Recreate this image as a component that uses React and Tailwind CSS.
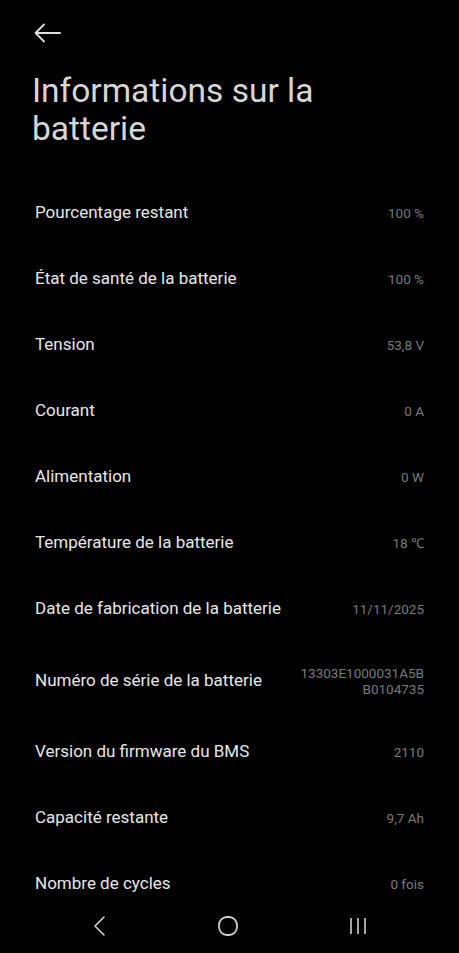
const rows = [
  ["Pourcentage restant", "100 %"],
  ["État de santé de la batterie", "100 %"],
  ["Tension", "53,8 V"],
  ["Courant", "0 A"],
  ["Alimentation", "0 W"],
  ["Température de la batterie", "18 ℃"],
  ["Date de fabrication de la batterie", "11/11/2025"],
  ["Numéro de série de la batterie", "13303E1000031A5B\nB0104735"],
  ["Version du firmware du BMS", "2110"],
  ["Capacité restante", "9,7 Ah"],
  ["Nombre de cycles", "0 fois"],
];

export default function App() {
  return (
    <div className="relative h-[953px] w-[459px] overflow-hidden bg-black font-['Roboto',sans-serif]">
      <div className="px-[32px] pt-[21px]">
        <svg width="28" height="24" viewBox="0 0 28 24" className="ml-[2px]" fill="none" stroke="#e0e0e0" strokeWidth="1.8" strokeLinecap="round" strokeLinejoin="round">
          <path d="M26 12H2M10 3.5L1.5 12L10 20.5" />
        </svg>
        <h1 className="mt-[27px] max-w-[330px] text-[33.5px] leading-[38px] text-[#d6d6d6]">
          Informations sur la batterie
        </h1>
      </div>
      <div className="mt-[32px]">
        {rows.map(([label, value]) => (
          <div key={label} className={`flex items-center justify-between pl-[35px] pr-[35px] ${value.includes("\n") ? "h-[77px]" : "h-[66px]"}`}>
            <span className="text-[17px] text-[#e6e6e6]">{label}</span>
            <span className="whitespace-pre-line text-right text-[13.5px] leading-[16px] text-[#7a7a7a]">{value}</span>
          </div>
        ))}
      </div>
      <div className="absolute bottom-0 left-0 flex h-[54px] w-full items-center justify-around bg-black px-[36px]">
        <svg width="20" height="22" viewBox="0 0 20 22" fill="none" stroke="#cfcfcf" strokeWidth="1.6" strokeLinecap="round" strokeLinejoin="round">
          <path d="M14 2L5 11L14 20" />
        </svg>
        <svg width="22" height="22" viewBox="0 0 22 22" fill="none" stroke="#cfcfcf" strokeWidth="1.8">
          <rect x="2" y="2" width="18" height="18" rx="8" />
        </svg>
        <svg width="22" height="22" viewBox="0 0 22 22" fill="none" stroke="#cfcfcf" strokeWidth="1.6">
          <path d="M4 3v16M11 3v16M18 3v16" />
        </svg>
      </div>
    </div>
  );
}
